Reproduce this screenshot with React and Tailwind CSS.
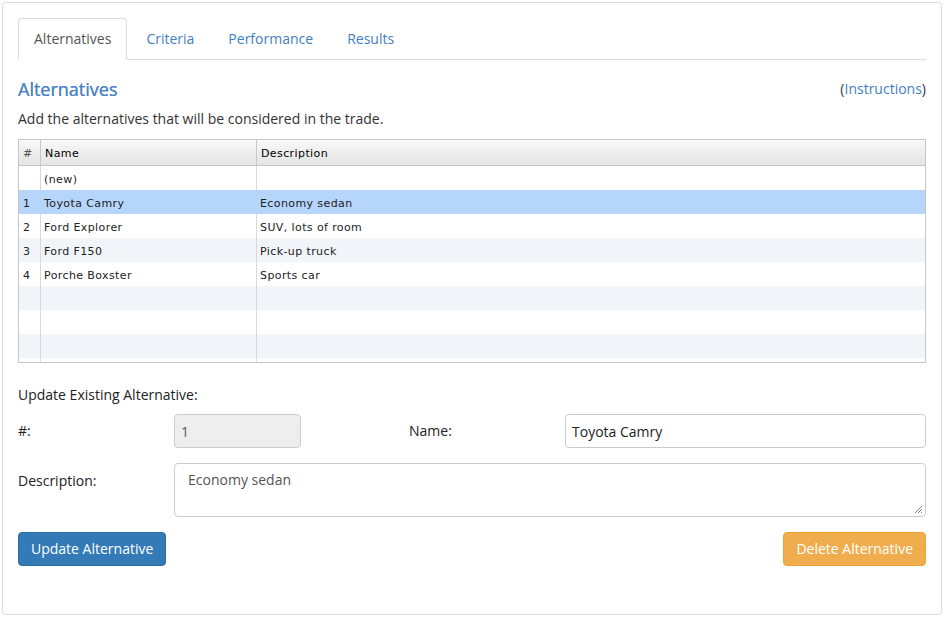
import React from 'react';

const rows = [
  { n: '', name: '(new)', desc: '' },
  { n: '1', name: 'Toyota Camry', desc: 'Economy sedan', selected: true },
  { n: '2', name: 'Ford Explorer', desc: 'SUV, lots of room' },
  { n: '3', name: 'Ford F150', desc: 'Pick-up truck' },
  { n: '4', name: 'Porche Boxster', desc: 'Sports car' },
  { n: '', name: '', desc: '' },
  { n: '', name: '', desc: '' },
  { n: '', name: '', desc: '' },
  { n: '', name: '', desc: '' },
];

export default function App() {
  return (
    <div className="bg-white p-[2px] text-[14px] text-[#333]" style={{ fontFamily: '"Open Sans", sans-serif' }}>
      <div className="h-[613px] w-[940px] rounded border border-[#ddd] px-[15px] pt-[15px]">
        {/* tabs */}
        <div className="flex border-b border-[#ddd]">
          <div className="-mb-px flex h-[42px] items-center rounded-t border border-[#ddd] border-b-white bg-white px-[15px] pb-[2px] text-[#555]">Alternatives</div>
          <div className="flex h-[41px] items-center px-[19px] text-[#3f7fbf]">Criteria</div>
          <div className="flex h-[41px] items-center px-[15px] text-[#3f7fbf]">Performance</div>
          <div className="flex h-[41px] items-center px-[19px] text-[#3f7fbf]">Results</div>
        </div>

        <div className="mt-[18px] flex h-[22px] items-center justify-between">
          <h3 className="text-[18px] font-medium leading-[22px] text-[#4a83c4] [text-shadow:0_0_0.4px_#4a83c4]">Alternatives</h3>
          <span className="leading-[20px]">
            (<span className="text-[#3f7fbf]">Instructions</span>)
          </span>
        </div>
        <p className="mt-[9px] leading-[20px]">Add the alternatives that will be considered in the trade.</p>

        {/* grid */}
        <div className="mt-[10px] h-[224px] overflow-hidden border border-[#c6c6c6] text-[11px] tracking-[0.4px] text-[#222]" style={{ fontFamily: '"DejaVu Sans", Verdana, sans-serif' }}>
          <div className="flex h-[26px] border-b border-[#c6c6c6] bg-gradient-to-b from-[#f8f8f8] to-[#e4e4e4] text-black">
            <div className="flex w-[22px] items-center border-r border-[#c6c6c6] pl-[4px] pt-[3px] text-[#555]">#</div>
            <div className="flex w-[216px] items-center border-r border-[#c6c6c6] pl-[4px] pt-[3px]">Name</div>
            <div className="flex flex-1 items-center pl-[4px] pt-[3px]">Description</div>
          </div>
          {rows.map((r, i) => (
            <div
              key={i}
              className={
                'flex h-[24px] ' +
                (r.selected ? 'bg-[#b5d5fb]' : i % 2 === 1 ? 'bg-[#f1f5fa]' : 'bg-white')
              }
            >
              <div className={'flex w-[22px] items-center pl-[4px] pt-[4px] ' + (r.selected ? '' : 'border-r border-[#d8d8d8]')}>{r.n}</div>
              <div className={'flex w-[216px] items-center pl-[3px] pt-[4px] ' + (r.selected ? '' : 'border-r border-[#d8d8d8]')}>{r.name}</div>
              <div className="flex flex-1 items-center pl-[3px] pt-[4px]">{r.desc}</div>
            </div>
          ))}
        </div>

        {/* form */}
        <div className="mt-[22px] leading-[20px] text-[#222]">Update Existing Alternative:</div>

        <div className="mt-[9px] flex items-center">
          <label className="w-[156px] pb-[1px] text-[#222]">#:</label>
          <div className="flex h-[34px] w-[127px] items-center rounded border border-[#ccc] bg-[#eee] px-[6px] text-[#555]">1</div>
          <label className="ml-[108px] w-[156px] pb-[1px] text-[#222]">Name:</label>
          <div className="flex h-[34px] flex-1 items-center rounded border border-[#ccc] bg-white px-[6px] text-[#222]">Toyota Camry</div>
        </div>

        <div className="mt-[15px] flex items-start">
          <label className="w-[156px] pt-[7px] text-[#222]">Description:</label>
          <div className="relative h-[54px] flex-1 rounded border border-[#ccc] bg-white px-[13px] pt-[5px] text-[#555]">
            Economy sedan
            <svg className="absolute bottom-[2px] right-[2px]" width="9" height="9" viewBox="0 0 9 9">
              <path d="M8 1 L1 8 M8 4 L4 8 M8 7 L7 8" stroke="#888" strokeWidth="1" />
            </svg>
          </div>
        </div>

        <div className="mt-[15px] flex justify-between">
          <button className="h-[34px] rounded border border-[#2e6da4] bg-[#337ab7] px-[12px] pb-[1px] text-white">Update Alternative</button>
          <button className="h-[34px] rounded border border-[#eea236] bg-[#f0ad4e] px-[12px] pb-[1px] text-white">Delete Alternative</button>
        </div>
      </div>
    </div>
  );
}
